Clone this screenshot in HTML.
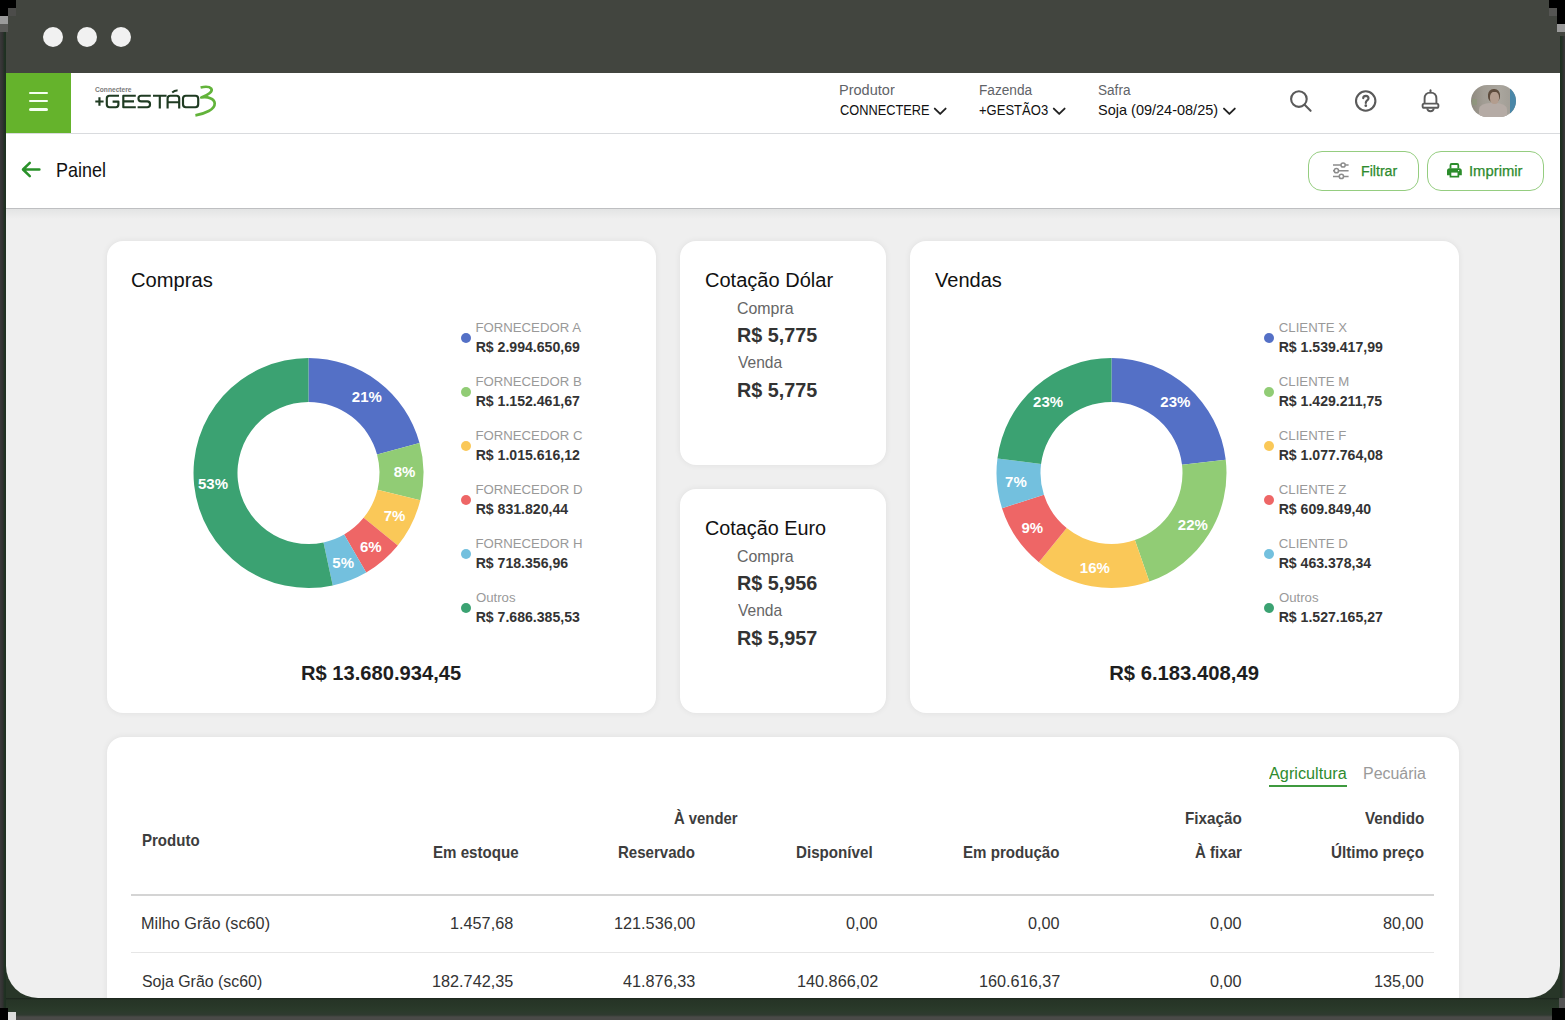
<!DOCTYPE html>
<html><head><meta charset="utf-8">
<style>
*{margin:0;padding:0;box-sizing:border-box}
html,body{width:1565px;height:1020px;overflow:hidden;background:#42453f;font-family:"Liberation Sans",sans-serif}
.a{position:absolute}
.t{position:absolute;line-height:1;white-space:nowrap;transform-origin:0 0}
.dot{position:absolute;width:10px;height:10px;border-radius:50%}
#frameL{left:0;top:32px;width:6px;height:988px;background:linear-gradient(90deg,#3a3a3a 0,#303030 3px,#223224 4px,#1d2f20 6px)}
#frameR{left:1560px;top:36px;width:5px;height:984px;background:linear-gradient(90deg,#1d2f20 0,#223224 2px,#303030 3px,#3a3a3a 5px)}
#frameB{left:0;top:940px;width:1565px;height:80px;background:#283628}
#screen{left:6px;top:73px;width:1554px;height:925px;background:#efefef;border-radius:0 0 32px 32px;overflow:hidden}
#hdr{left:6px;top:73px;width:1554px;height:61px;background:#fff;border-bottom:1px solid #d9dbde}
#burger{left:6px;top:73px;width:65px;height:60px;background:#65b32c}
.bl{position:absolute;left:23px;width:19px;height:2.6px;border-radius:2px;background:#f4fff0}
#pbar{left:6px;top:134px;width:1554px;height:75px;background:#fff;border-bottom:1px solid #bebfc1}
.card{position:absolute;background:#fff;border-radius:16px;box-shadow:0 0 6px rgba(0,0,0,0.07)}
.btn{position:absolute;top:150.5px;height:40px;border:1.4px solid #95cd80;border-radius:14px;background:#fff}
.tdot{position:absolute;top:26.5px;width:20px;height:20px;border-radius:50%;background:#f1f1f1}
</style></head><body>
<div class="a" id="frameB"></div>
<div class="a" id="screen"></div>
<div class="a" id="frameL"></div>
<div class="a" id="frameR"></div>
<div class="tdot" style="left:43px"></div>
<div class="tdot" style="left:76.5px"></div>
<div class="tdot" style="left:110.5px"></div>
<div class="a" id="hdr"></div>
<div class="a" id="burger">
  <div class="bl" style="top:18.7px"></div>
  <div class="bl" style="top:26.9px"></div>
  <div class="bl" style="top:35.1px"></div>
</div>
<div class="a" id="pbar"></div>
<div class="a" style="left:6px;top:209px;width:1554px;height:10px;background:linear-gradient(#e3e4e4,#efefef)"></div>

<!-- cards -->
<div class="card" style="left:107px;top:241px;width:549px;height:472px"></div>
<div class="card" style="left:680px;top:241px;width:206px;height:224px"></div>
<div class="card" style="left:680px;top:489px;width:206px;height:224px"></div>
<div class="card" style="left:910px;top:241px;width:549px;height:472px"></div>
<div class="card" style="left:107px;top:737px;width:1352px;height:400px"></div>

<!-- table lines -->
<div class="a" style="left:131px;top:894px;width:1303px;height:2px;background:#d4d4d4"></div>
<div class="a" style="left:131px;top:951.5px;width:1303px;height:1.2px;background:#e6e6e6"></div>
<div class="a" style="left:1269px;top:785.2px;width:78px;height:2px;background:#3f9a3f"></div>

<!-- buttons -->
<div class="btn" style="left:1307.5px;width:111px"></div>
<div class="btn" style="left:1426.5px;width:117px"></div>

<svg class="a" style="left:0;top:0" width="1565" height="1020" viewBox="0 0 1565 1020">
<path fill="#5470c6" d="M308.50 358.00A115 115 0 0 1 419.51 442.98L377.04 454.47A71 71 0 0 0 308.50 402.00Z"/>
<path fill="#91cc75" d="M419.51 442.98A115 115 0 0 1 420.24 500.20L377.48 489.79A71 71 0 0 0 377.04 454.47Z"/>
<path fill="#fac858" d="M420.24 500.20A115 115 0 0 1 397.78 545.49L363.62 517.75A71 71 0 0 0 377.48 489.79Z"/>
<path fill="#ee6666" d="M397.78 545.49A115 115 0 0 1 366.22 572.46L344.14 534.41A71 71 0 0 0 363.62 517.75Z"/>
<path fill="#73c0de" d="M366.22 572.46A115 115 0 0 1 332.74 585.42L323.47 542.40A71 71 0 0 0 344.14 534.41Z"/>
<path fill="#3ba272" d="M332.74 585.42A115 115 0 1 1 308.50 358.00L308.50 402.00A71 71 0 1 0 323.47 542.40Z"/>
<path fill="#5470c6" d="M1111.50 358.00A115 115 0 0 1 1225.73 459.74L1182.03 464.81A71 71 0 0 0 1111.50 402.00Z"/>
<path fill="#91cc75" d="M1225.73 459.74A115 115 0 0 1 1149.35 581.59L1134.87 540.04A71 71 0 0 0 1182.03 464.81Z"/>
<path fill="#fac858" d="M1149.35 581.59A115 115 0 0 1 1038.88 562.17L1066.67 528.05A71 71 0 0 0 1134.87 540.04Z"/>
<path fill="#ee6666" d="M1038.88 562.17A115 115 0 0 1 1002.01 508.18L1043.90 494.72A71 71 0 0 0 1066.67 528.05Z"/>
<path fill="#73c0de" d="M1002.01 508.18A115 115 0 0 1 997.43 458.41L1041.07 464.00A71 71 0 0 0 1043.90 494.72Z"/>
<path fill="#3ba272" d="M997.43 458.41A115 115 0 0 1 1111.50 358.00L1111.50 402.00A71 71 0 0 0 1041.07 464.00Z"/>
</svg>

<div class="t" style="left:839.24px;top:83.17px;font-size:14.80px;color:#5f6368;font-weight:400;transform:scaleX(0.9819);">Produtor</div>
<div class="t" style="left:839.76px;top:103.40px;font-size:14.53px;color:#111;font-weight:400;transform:scaleX(0.8823);">CONNECTERE</div>
<div class="t" style="left:978.91px;top:83.28px;font-size:14.66px;color:#5f6368;font-weight:400;transform:scaleX(0.9311);">Fazenda</div>
<div class="t" style="left:979.08px;top:103.40px;font-size:14.53px;color:#111;font-weight:400;transform:scaleX(0.8975);">+GESTÃO3</div>
<div class="t" style="left:1098.46px;top:83.28px;font-size:14.66px;color:#5f6368;font-weight:400;transform:scaleX(0.9270);">Safra</div>
<div class="t" style="left:1098.42px;top:103.34px;font-size:14.60px;color:#111;font-weight:400;transform:scaleX(0.9935);">Soja (09/24-08/25)</div>
<div class="t" style="left:56.36px;top:159.50px;font-size:20.67px;color:#111;font-weight:400;transform:scaleX(0.8694);">Painel</div>
<div class="t" style="left:1360.77px;top:163.54px;font-size:14.25px;color:#2e8b2e;font-weight:400;transform:scaleX(0.9950);-webkit-text-stroke:0.25px #2e8b2e">Filtrar</div>
<div class="t" style="left:1468.67px;top:163.54px;font-size:14.25px;color:#2e8b2e;font-weight:400;transform:scaleX(1.0407);-webkit-text-stroke:0.25px #2e8b2e">Imprimir</div>
<div class="t" style="left:131.29px;top:270.13px;font-size:20.39px;color:#111;font-weight:400;transform:scaleX(0.9890);">Compras</div>
<div class="t" style="left:934.60px;top:270.13px;font-size:20.39px;color:#111;font-weight:400;transform:scaleX(0.9834);">Vendas</div>
<div class="t" style="left:475.44px;top:320.62px;font-size:13.20px;color:#999;font-weight:400;">FORNECEDOR A</div>
<div class="t" style="left:475.65px;top:340.06px;font-size:14.10px;color:#333;font-weight:700;">R$ 2.994.650,69</div>
<div class="t" style="left:475.44px;top:374.62px;font-size:13.20px;color:#999;font-weight:400;">FORNECEDOR B</div>
<div class="t" style="left:475.65px;top:394.06px;font-size:14.10px;color:#333;font-weight:700;">R$ 1.152.461,67</div>
<div class="t" style="left:475.44px;top:428.62px;font-size:13.20px;color:#999;font-weight:400;">FORNECEDOR C</div>
<div class="t" style="left:475.65px;top:448.06px;font-size:14.10px;color:#333;font-weight:700;">R$ 1.015.616,12</div>
<div class="t" style="left:475.44px;top:482.62px;font-size:13.20px;color:#999;font-weight:400;">FORNECEDOR D</div>
<div class="t" style="left:475.65px;top:502.06px;font-size:14.10px;color:#333;font-weight:700;">R$ 831.820,44</div>
<div class="t" style="left:475.44px;top:536.62px;font-size:13.20px;color:#999;font-weight:400;">FORNECEDOR H</div>
<div class="t" style="left:475.65px;top:556.06px;font-size:14.10px;color:#333;font-weight:700;">R$ 718.356,96</div>
<div class="t" style="left:475.97px;top:590.62px;font-size:13.20px;color:#999;font-weight:400;">Outros</div>
<div class="t" style="left:475.65px;top:610.06px;font-size:14.10px;color:#333;font-weight:700;">R$ 7.686.385,53</div>
<div class="t" style="left:1278.84px;top:320.62px;font-size:13.20px;color:#999;font-weight:400;">CLIENTE X</div>
<div class="t" style="left:1278.65px;top:340.06px;font-size:14.10px;color:#333;font-weight:700;">R$ 1.539.417,99</div>
<div class="t" style="left:1278.84px;top:374.62px;font-size:13.20px;color:#999;font-weight:400;">CLIENTE M</div>
<div class="t" style="left:1278.65px;top:394.06px;font-size:14.10px;color:#333;font-weight:700;">R$ 1.429.211,75</div>
<div class="t" style="left:1278.84px;top:428.62px;font-size:13.20px;color:#999;font-weight:400;">CLIENTE F</div>
<div class="t" style="left:1278.65px;top:448.06px;font-size:14.10px;color:#333;font-weight:700;">R$ 1.077.764,08</div>
<div class="t" style="left:1278.84px;top:482.62px;font-size:13.20px;color:#999;font-weight:400;">CLIENTE Z</div>
<div class="t" style="left:1278.65px;top:502.06px;font-size:14.10px;color:#333;font-weight:700;">R$ 609.849,40</div>
<div class="t" style="left:1278.84px;top:536.62px;font-size:13.20px;color:#999;font-weight:400;">CLIENTE D</div>
<div class="t" style="left:1278.65px;top:556.06px;font-size:14.10px;color:#333;font-weight:700;">R$ 463.378,34</div>
<div class="t" style="left:1278.97px;top:590.62px;font-size:13.20px;color:#999;font-weight:400;">Outros</div>
<div class="t" style="left:1278.65px;top:610.06px;font-size:14.10px;color:#333;font-weight:700;">R$ 1.527.165,27</div>
<div class="t" style="left:351.84px;top:389.44px;font-size:15.00px;color:#fff;font-weight:700;">21%</div>
<div class="t" style="left:393.65px;top:464.46px;font-size:15.00px;color:#fff;font-weight:700;">8%</div>
<div class="t" style="left:383.66px;top:508.32px;font-size:15.00px;color:#fff;font-weight:700;">7%</div>
<div class="t" style="left:360.04px;top:538.64px;font-size:15.00px;color:#fff;font-weight:700;">6%</div>
<div class="t" style="left:332.30px;top:555.20px;font-size:15.00px;color:#fff;font-weight:700;">5%</div>
<div class="t" style="left:198.03px;top:475.85px;font-size:15.00px;color:#fff;font-weight:700;">53%</div>
<div class="t" style="left:1160.34px;top:393.98px;font-size:15.00px;color:#fff;font-weight:700;">23%</div>
<div class="t" style="left:1177.83px;top:516.66px;font-size:15.00px;color:#fff;font-weight:700;">22%</div>
<div class="t" style="left:1079.86px;top:560.22px;font-size:15.00px;color:#fff;font-weight:700;">16%</div>
<div class="t" style="left:1021.38px;top:519.80px;font-size:15.00px;color:#fff;font-weight:700;">9%</div>
<div class="t" style="left:1005.06px;top:474.47px;font-size:15.00px;color:#fff;font-weight:700;">7%</div>
<div class="t" style="left:1033.06px;top:393.61px;font-size:15.00px;color:#fff;font-weight:700;">23%</div>
<div class="t" style="left:301.49px;top:662.55px;font-size:20.25px;color:#1e1e1e;font-weight:700;transform:scaleX(0.9945);">R$ 13.680.934,45</div>
<div class="t" style="left:1109.19px;top:662.55px;font-size:20.25px;color:#1e1e1e;font-weight:700;">R$ 6.183.408,49</div>
<div class="t" style="left:704.50px;top:269.93px;font-size:20.39px;color:#111;font-weight:400;transform:scaleX(0.9833);">Cotação Dólar</div>
<div class="t" style="left:736.80px;top:299.96px;font-size:16.34px;color:#666;font-weight:400;transform:scaleX(0.9745);">Compra</div>
<div class="t" style="left:736.61px;top:325.22px;font-size:20.53px;color:#333;font-weight:700;transform:scaleX(0.9625);">R$ 5,775</div>
<div class="t" style="left:737.50px;top:354.26px;font-size:16.34px;color:#666;font-weight:400;transform:scaleX(0.9545);">Venda</div>
<div class="t" style="left:736.61px;top:379.52px;font-size:20.53px;color:#333;font-weight:700;transform:scaleX(0.9625);">R$ 5,775</div>
<div class="t" style="left:704.51px;top:517.93px;font-size:20.39px;color:#111;font-weight:400;transform:scaleX(0.9721);">Cotação Euro</div>
<div class="t" style="left:736.80px;top:547.96px;font-size:16.34px;color:#666;font-weight:400;transform:scaleX(0.9745);">Compra</div>
<div class="t" style="left:736.61px;top:573.22px;font-size:20.53px;color:#333;font-weight:700;transform:scaleX(0.9649);">R$ 5,956</div>
<div class="t" style="left:737.50px;top:602.26px;font-size:16.34px;color:#666;font-weight:400;transform:scaleX(0.9545);">Venda</div>
<div class="t" style="left:736.61px;top:627.52px;font-size:20.53px;color:#333;font-weight:700;transform:scaleX(0.9649);">R$ 5,957</div>
<div class="t" style="left:1269.00px;top:766.13px;font-size:16.62px;color:#2e8b2e;font-weight:400;transform:scaleX(0.9786);">Agricultura</div>
<div class="t" style="left:1362.72px;top:766.13px;font-size:16.62px;color:#9a9a9a;font-weight:400;transform:scaleX(0.9607);">Pecuária</div>
<div class="t" style="left:141.60px;top:832.96px;font-size:15.64px;color:#3d3d3d;font-weight:700;transform:scaleX(0.9619);">Produto</div>
<div class="t" style="left:673.50px;top:811.26px;font-size:15.64px;color:#3d3d3d;font-weight:700;transform:scaleX(0.9506);">À vender</div>
<div class="t" style="left:1185.08px;top:811.26px;font-size:15.64px;color:#3d3d3d;font-weight:700;transform:scaleX(0.9765);">Fixação</div>
<div class="t" style="left:1365.00px;top:811.26px;font-size:15.64px;color:#3d3d3d;font-weight:700;transform:scaleX(0.9776);">Vendido</div>
<div class="t" style="left:432.69px;top:845.36px;font-size:15.64px;color:#3d3d3d;font-weight:700;transform:scaleX(0.9666);">Em estoque</div>
<div class="t" style="left:618.30px;top:845.36px;font-size:15.64px;color:#3d3d3d;font-weight:700;transform:scaleX(0.9635);">Reservado</div>
<div class="t" style="left:796.49px;top:845.36px;font-size:15.64px;color:#3d3d3d;font-weight:700;transform:scaleX(0.9702);">Disponível</div>
<div class="t" style="left:963.39px;top:845.36px;font-size:15.64px;color:#3d3d3d;font-weight:700;transform:scaleX(0.9662);">Em produção</div>
<div class="t" style="left:1194.70px;top:845.36px;font-size:15.64px;color:#3d3d3d;font-weight:700;transform:scaleX(0.9642);">À fixar</div>
<div class="t" style="left:1331.39px;top:845.36px;font-size:15.64px;color:#3d3d3d;font-weight:700;transform:scaleX(0.9736);">Último preço</div>
<div class="t" style="left:141.10px;top:915.40px;font-size:16.06px;color:#333;font-weight:400;transform:scaleX(1.0119);">Milho Grão (sc60)</div>
<div class="t" style="left:449.74px;top:915.40px;font-size:16.06px;color:#333;font-weight:400;transform:scaleX(1.0117);">1.457,68</div>
<div class="t" style="left:614.36px;top:915.40px;font-size:16.06px;color:#333;font-weight:400;transform:scaleX(1.0117);">121.536,00</div>
<div class="t" style="left:846.46px;top:915.40px;font-size:16.06px;color:#333;font-weight:400;transform:scaleX(1.0117);">0,00</div>
<div class="t" style="left:1028.46px;top:915.40px;font-size:16.06px;color:#333;font-weight:400;transform:scaleX(1.0117);">0,00</div>
<div class="t" style="left:1210.46px;top:915.40px;font-size:16.06px;color:#333;font-weight:400;transform:scaleX(1.0117);">0,00</div>
<div class="t" style="left:1383.43px;top:915.40px;font-size:16.06px;color:#333;font-weight:400;transform:scaleX(1.0117);">80,00</div>
<div class="t" style="left:141.76px;top:972.90px;font-size:16.06px;color:#333;font-weight:400;transform:scaleX(0.9908);">Soja Grão (sc60)</div>
<div class="t" style="left:431.66px;top:972.90px;font-size:16.06px;color:#333;font-weight:400;transform:scaleX(1.0117);">182.742,35</div>
<div class="t" style="left:623.40px;top:972.90px;font-size:16.06px;color:#333;font-weight:400;transform:scaleX(1.0117);">41.876,33</div>
<div class="t" style="left:796.93px;top:972.90px;font-size:16.06px;color:#333;font-weight:400;transform:scaleX(1.0117);">140.866,02</div>
<div class="t" style="left:978.93px;top:972.90px;font-size:16.06px;color:#333;font-weight:400;transform:scaleX(1.0117);">160.616,37</div>
<div class="t" style="left:1210.46px;top:972.90px;font-size:16.06px;color:#333;font-weight:400;transform:scaleX(1.0117);">0,00</div>
<div class="t" style="left:1374.39px;top:972.90px;font-size:16.06px;color:#333;font-weight:400;transform:scaleX(1.0117);">135,00</div>
<div class="dot" style="left:461px;top:332.5px;background:#5470c6"></div>
<div class="dot" style="left:461px;top:386.5px;background:#91cc75"></div>
<div class="dot" style="left:461px;top:440.5px;background:#fac858"></div>
<div class="dot" style="left:461px;top:494.5px;background:#ee6666"></div>
<div class="dot" style="left:461px;top:548.5px;background:#73c0de"></div>
<div class="dot" style="left:461px;top:602.5px;background:#3ba272"></div>
<div class="dot" style="left:1264px;top:332.5px;background:#5470c6"></div>
<div class="dot" style="left:1264px;top:386.5px;background:#91cc75"></div>
<div class="dot" style="left:1264px;top:440.5px;background:#fac858"></div>
<div class="dot" style="left:1264px;top:494.5px;background:#ee6666"></div>
<div class="dot" style="left:1264px;top:548.5px;background:#73c0de"></div>
<div class="dot" style="left:1264px;top:602.5px;background:#3ba272"></div>

<!-- icons -->
<svg class="a" style="left:0;top:0" width="1565" height="1020" viewBox="0 0 1565 1020" fill="none">
  <!-- logo -->
  <text x="95" y="92" font-family="Liberation Sans" font-weight="700" font-size="8" fill="#7a7a7a" textLength="36.5" lengthAdjust="spacingAndGlyphs">Connectere</text>
  <g stroke="#1f3b22" stroke-width="2.15" stroke-linecap="butt" stroke-linejoin="round">
    <path d="M95.3 101.5H103.6M99.45 97.3V105.7"/>
    <path d="M119 95.7H109.5Q106.8 95.7 106.8 98.4V104.6Q106.8 107.2 109.5 107.2H115.8Q118.4 107.2 118.4 104.6V101.6H112.6"/>
    <path d="M135.8 95.7H123.3V107.2H135.8M123.3 101.4H134"/>
    <path d="M150.8 95.7H141.2Q138.5 95.7 138.5 98.2V98.8Q138.5 101.4 141.2 101.4H147.2Q150 101.4 150 104.1V104.5Q150 107.2 147.2 107.2H137.6"/>
    <path d="M153 95.7H166.6M159.8 95.7V108.4"/>
    <path d="M167.6 108.4V98.4Q167.6 95.7 170.3 95.7H176.6Q179.2 95.7 179.2 98.4V108.4M167.6 102.2H179.2"/>
    <path d="M172.2 92.6Q175 90.2 177.6 90.6" stroke-width="2"/>
    <path d="M185.8 95.7H195.4Q198.2 95.7 198.2 98.6V104.3Q198.2 107.2 195.4 107.2H185.8Q183 107.2 183 104.3V98.6Q183 95.7 185.8 95.7Z"/>
  </g>
  <path d="M200.6 87.5C204 86.7 209.3 86.3 211.3 88.7C213.2 91.4 207.8 95.2 201.3 97.5C207.6 96.5 214.4 98.4 214.7 103.3C215 109.4 205 113.8 195.4 115.3" stroke="#62b33a" stroke-width="2.7" fill="none" stroke-linejoin="round"/>

  <!-- back arrow -->
  <g stroke="#2a912a" stroke-width="2.5" stroke-linecap="round" stroke-linejoin="round">
    <path d="M39.4 169.5H23.2M29.8 162.8L23 169.5L29.8 176.2"/>
  </g>
  <!-- chevrons -->
  <g stroke="#222" stroke-width="1.9" stroke-linecap="round" stroke-linejoin="round">
    <path d="M934.8 108.6L940.2 113.9L945.6 108.6"/>
    <path d="M1053.8 108.6L1059.2 113.9L1064.6 108.6"/>
    <path d="M1224 108.6L1229.4 113.9L1234.8 108.6"/>
  </g>
  <!-- search -->
  <g stroke="#5a5a5a" stroke-width="2.1" stroke-linecap="round">
    <circle cx="1298.9" cy="99.05" r="7.8"/>
    <path d="M1304.6 104.8L1310.6 110.8"/>
    <circle cx="1365.7" cy="101" r="9.7"/>
    <path d="M1363.2 98.2Q1363.4 95.9 1365.9 95.9Q1368.4 96 1368.5 98.2Q1368.5 99.6 1366.9 100.7Q1365.8 101.6 1365.8 102.9" stroke-width="2.2"/>
  </g>
  <circle cx="1365.8" cy="105.7" r="1.35" fill="#5a5a5a"/>
  <!-- bell -->
  <g stroke="#5a5a5a" stroke-width="1.9" stroke-linejoin="round">
    <path d="M1424.6 103.4V98.6Q1424.6 92.6 1430.5 92.6Q1436.4 92.6 1436.4 98.6V103.4"/>
    <rect x="1422.6" y="103.6" width="15.8" height="4.2" rx="1.6"/>
    <path d="M1427.2 108.4Q1427.6 111.2 1430.5 111.2Q1433.4 111.2 1433.8 108.4"/>
    <path d="M1430.5 92.4V90.2" stroke-linecap="round"/>
  </g>
  <!-- filter icon -->
  <g stroke="#8c8c8c" stroke-width="1.5">
    <path d="M1333 165H1341M1345.2 165H1348.6M1333 170.7H1334.3M1338.5 170.7H1348.6M1333 176.4H1339.3M1343.5 176.4H1348.6"/>
    <circle cx="1343.1" cy="165" r="2.1"/>
    <circle cx="1336.4" cy="170.7" r="2.1"/>
    <circle cx="1341.4" cy="176.4" r="2.1"/>
  </g>
  <!-- printer -->
  <g fill="#2b8c2b">
    <path d="M1449.6 168.6V165.2Q1449.6 163.1 1451.7 163.1H1457.1Q1459.2 163.1 1459.2 165.2V168.6H1457.4V165H1451.4V168.6Z"/>
    <path d="M1449.5 168.3H1459.3Q1461.8 168.3 1461.8 170.8V175.2H1459.2V177.4H1449.6V175.2H1447V170.8Q1447 168.3 1449.5 168.3Z"/>
  </g>
  <rect x="1451.3" y="172.6" width="6.2" height="3.2" fill="#fff"/>
  <circle cx="1458.6" cy="170.6" r="0.7" fill="#fff"/>
</svg>
<!-- avatar -->
<div class="a" style="left:1471px;top:85px;width:45px;height:31.5px;border-radius:16px;overflow:hidden;background:linear-gradient(90deg,#8e897f 0,#a19c93 12px,#aaa69e 28px,#a39f97 38px)">
  <div class="a" style="left:38.5px;top:0;width:7px;height:32px;background:#4a87a8"></div>
  <div class="a" style="left:1px;top:14px;width:5px;height:6px;background:#8c9a78;opacity:.6"></div>
  <div class="a" style="left:8px;top:17.5px;width:28px;height:16px;border-radius:40% 40% 0 0;background:#b5aba5"></div>
  <div class="a" style="left:17px;top:4px;width:12px;height:13px;border-radius:45% 45% 40% 40%;background:#5e4c3d"></div>
  <div class="a" style="left:18.5px;top:6.5px;width:9px;height:12px;border-radius:40% 40% 45% 45%;background:#b39d8e"></div>
</div>
</div>


<!-- bottom frame -->
<div class="a" style="left:6px;top:998px;width:1554px;height:22px;background:linear-gradient(#1b231c 0,#263426 2px,#2a3a2a 12px,#2f3a30 17px,#4a4a48 19px)"></div>
<div class="a" style="left:0;top:0;width:16px;height:8px;background:#000"></div>
<div class="a" style="left:0;top:8px;width:8px;height:8px;background:#000"></div>
<div class="a" style="left:8px;top:8px;width:8px;height:8px;background:#4c4c4a"></div>
<div class="a" style="left:0;top:16px;width:8px;height:8px;background:#9a9a9a"></div>
<div class="a" style="left:0;top:24px;width:8px;height:8px;background:#5a5a58"></div>
<div class="a" style="left:1549px;top:0;width:16px;height:8px;background:#000"></div>
<div class="a" style="left:1557px;top:8px;width:8px;height:16px;background:#000"></div>
<div class="a" style="left:1549px;top:8px;width:8px;height:8px;background:#555553"></div>
<div class="a" style="left:1557px;top:24px;width:8px;height:8px;background:#9a9a9a"></div>
<div class="a" style="left:0;top:1008px;width:8px;height:12px;background:#000"></div>
<div class="a" style="left:8px;top:1012px;width:8px;height:8px;background:#dcdcdc"></div>
<div class="a" style="left:1552px;top:1008px;width:13px;height:12px;background:#000"></div>
<div class="a" style="left:1559px;top:998px;width:6px;height:10px;background:#555"></div>
</body></html>
